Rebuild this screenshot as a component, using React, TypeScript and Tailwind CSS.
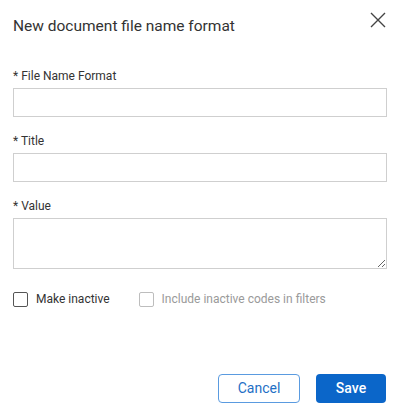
import React from 'react';

const font = { fontFamily: 'Roboto, "Liberation Sans", sans-serif' };

function Field({ label, multiline }: { label: string; multiline?: boolean }) {
  return (
    <div className="flex flex-col">
      <label className="text-[12px] leading-4 text-[#333333]">* {label}</label>
      {multiline ? (
        <textarea className="mt-[4px] h-[51px] w-full border border-[#cfcfcf] bg-white outline-none" />
      ) : (
        <input className="mt-[4px] h-[29px] w-full border border-[#cfcfcf] bg-white outline-none" />
      )}
    </div>
  );
}

export default function App() {
  return (
    <div className="h-[418px] w-[400px] bg-white" style={font}>
      <div className="flex items-start justify-between pl-[13px] pr-[14px] pt-[14px]">
        <h2 className="text-[15.5px] leading-6 text-[#333333]">New document file name format</h2>
        <svg width="16" height="16" viewBox="0 0 16 16" className="mt-[-2px]">
          <path d="M1 1 L15 15 M15 1 L1 15" stroke="#444444" strokeWidth="1.4" />
        </svg>
      </div>

      <div className="mt-[30px] flex flex-col gap-[16px] px-[13px]">
        <Field label="File Name Format" />
        <Field label="Title" />
        <Field label="Value" multiline />
      </div>

      <div className="mt-[22px] flex items-center px-[13px] text-[12px] leading-4">
        <label className="flex items-center gap-[8px] text-[#333333]">
          <span className="h-[15px] w-[15px] rounded-[2px] border border-[#555555] bg-white" />
          Make inactive
        </label>
        <label className="ml-[29px] flex items-center gap-[8px] text-[#9a9a9a]">
          <span className="h-[15px] w-[15px] rounded-[2px] border border-[#bdbdbd] bg-white" />
          Include inactive codes in filters
        </label>
      </div>

      <div className="mt-[67px] flex justify-end gap-[16px] pr-[14px]">
        <button className="h-[29px] w-[82px] rounded-[4px] border border-[#5a9be0] bg-white text-[14px] text-[#1f6fc5]">
          Cancel
        </button>
        <button className="h-[29px] w-[70px] rounded-[4px] bg-[#0b66c9] text-[14px] font-medium text-white">
          Save
        </button>
      </div>
    </div>
  );
}
